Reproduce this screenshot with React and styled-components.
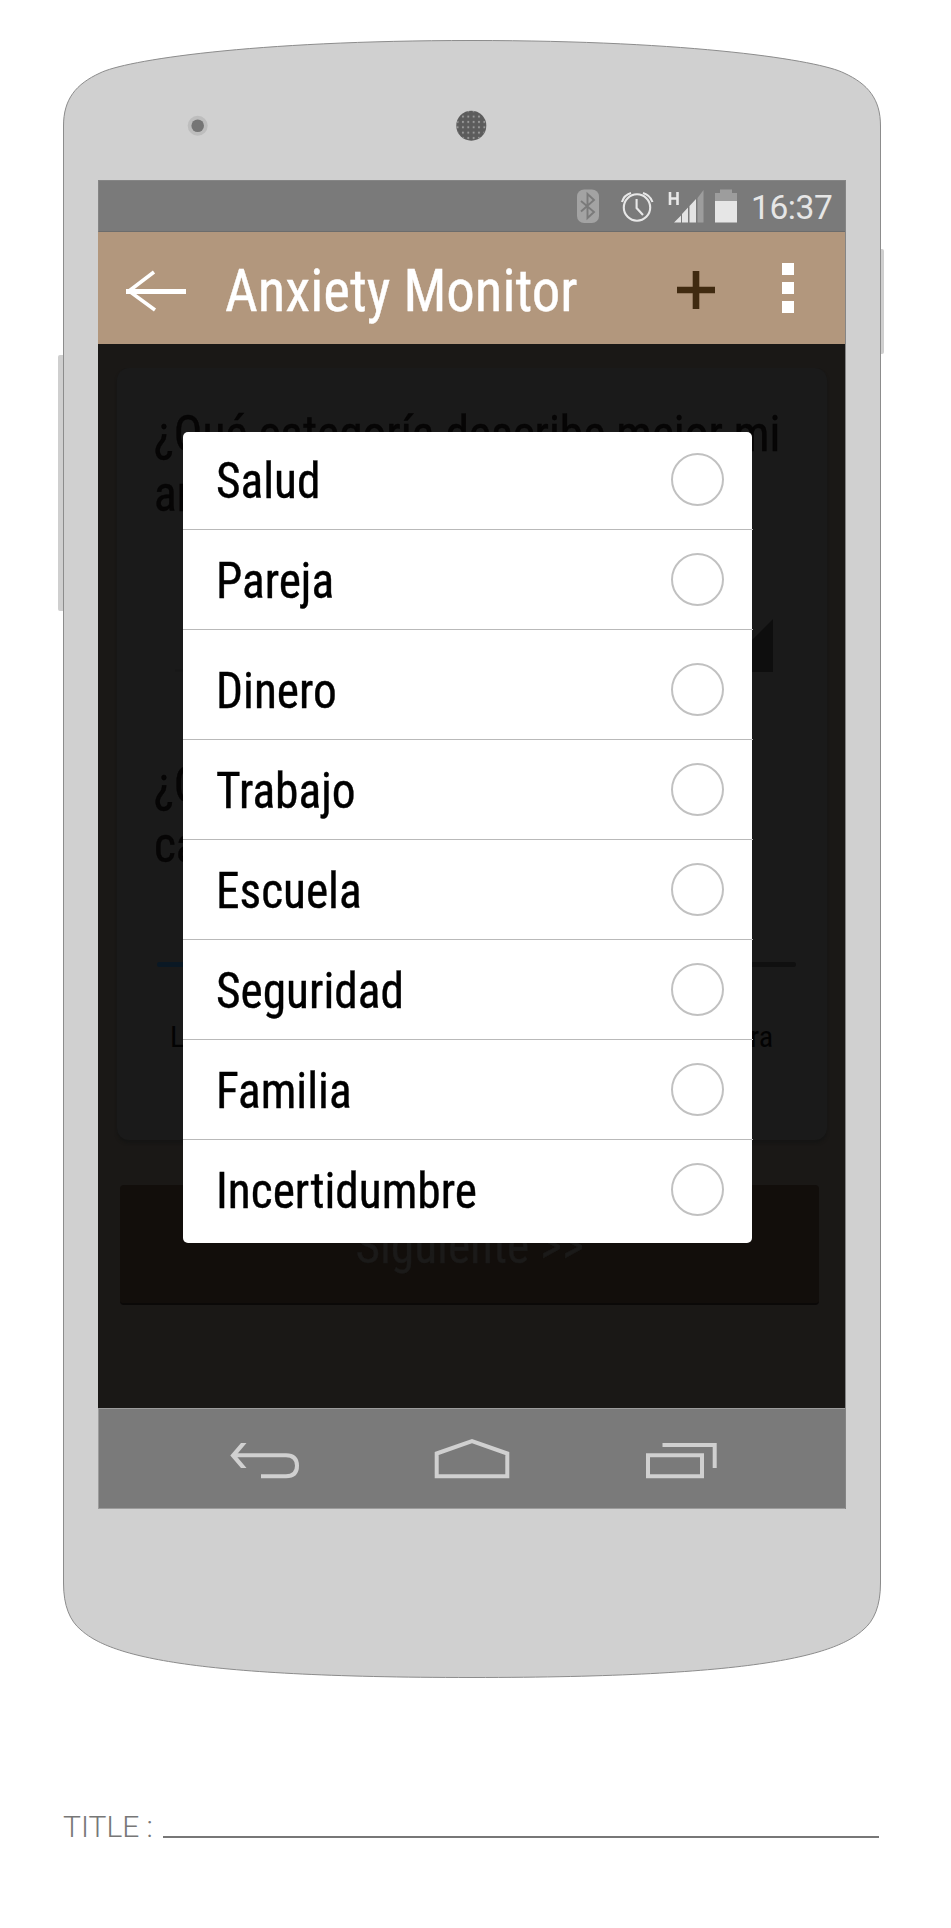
import React from "react";
import styled, { createGlobalStyle, css } from "styled-components";

const GlobalStyle = createGlobalStyle`
  * { box-sizing: border-box; }
  body { margin: 0; background: #fff; font-family: Roboto, "Liberation Sans", sans-serif; }
`;

const condensed = css`
  font-family: "Roboto Condensed", Roboto, sans-serif;
  font-stretch: 75%;
  font-weight: 430;
`;

const narrow = css`
  ${condensed}
  -webkit-text-stroke: 0.4px currentColor;
  transform: scaleX(0.947);
  transform-origin: left center;
`;

const Page = styled.main`
  width: 951px;
  height: 1928px;
  padding: 40px 0 0 58px;
  overflow: hidden;
`;

const Phone = styled.section`
  position: relative;
  width: 827px;
  height: 1638px;
  padding: 0 39px 0 40px;
`;

const Shell = styled.svg`
  position: absolute;
  left: -58px;
  top: -40px;
`;

const Bezel = styled.div`
  position: relative;
  height: 140px;
`;

const Screen = styled.div`
  position: relative;
  display: flex;
  flex-direction: column;
  width: 748px;
  height: 1329px;
  border-right: 1px solid #858585;
`;

const StatusBar = styled.div`
  display: flex;
  align-items: center;
  justify-content: flex-end;
  height: 52px;
  padding-right: 12px;
  background: #7a7a7a;
  border: 1px solid #858585;
  border-bottom-color: #6c6c6c;
  border-right: 0;
`;

const StatusIcons = styled.svg`
  flex: none;
  margin-right: 13px;
`;

const Clock = styled.time`
  width: 82px;
  font-size: 33.5px;
  line-height: 50px;
  letter-spacing: -0.4px;
  padding-top: 4px;
  color: #e6e6e6;
`;

const AppBar = styled.header`
  display: flex;
  align-items: center;
  height: 112px;
  padding: 6px 0 0 28px;
  background: #b2977d;
`;

const Title = styled.h1`
  ${narrow}
  width: 452px;
  margin: 0 0 0 39px;
  font-size: 60px;
  line-height: 106px;
  white-space: nowrap;
  color: #fff;
`;

const Overflow = styled.div`
  display: grid;
  gap: 7px;
  margin-left: 67px;
  padding-bottom: 6px;
`;

const Square = styled.i`
  width: 12px;
  height: 12px;
  background: #fff;
`;

const Content = styled.div`
  position: relative;
  height: 1064px;
  padding: 24px 0 0 19px;
  background: #1a1816;
`;

const Card = styled.div`
  width: 710px;
  height: 772px;
  padding: 36px 0 0 37px;
  border-radius: 12px;
  background: #1a1a1a;
  box-shadow: 0 3px 3px #151514;
`;

const Question = styled.p`
  ${narrow}
  height: 120px;
  margin: 0;
  font-size: 50px;
  line-height: 60px;
  white-space: pre;
  color: #060505;
`;

const Spinner = styled.svg`
  display: block;
  margin: 94px 0 83px 21px;
`;

const Track = styled.div`
  width: 639px;
  height: 5px;
  margin: 87px 0 0 3px;
  border-radius: 2px;
  background: linear-gradient(90deg, #0a1824 30%, #101010 30%);
`;

const Scale = styled.div`
  ${condensed}
  display: flex;
  justify-content: space-between;
  width: 603px;
  margin: 50px 0 0 16px;
  font-size: 30px;
  line-height: 40px;
  color: #030303;
`;

const NextButton = styled.button`
  display: block;
  width: 699px;
  height: 120px;
  margin: 45px 0 0 3px;
  padding: 4px 0 0;
  border: 0;
  border-radius: 4px;
  border-bottom: 2px solid #0b0908;
  background: #120e0b;
  color: #1b1a19;
  font-size: 50px;
`;

const NextLabel = styled.span`
  ${narrow}
  display: inline-block;
  transform-origin: center;
`;

const Dialog = styled.ul`
  position: absolute;
  left: 85px;
  top: 88px;
  width: 569px;
  height: 811px;
  margin: 0;
  padding: 0;
  list-style: none;
  background: #fff;
  border-radius: 5px;
`;

const Option = styled.li`
  display: flex;
  align-items: center;
  justify-content: space-between;
  width: 570px;
  height: ${(p) => p.$height || 100}px;
  padding: ${(p) => p.$pad || "0"};
  padding-left: 33px;
  padding-right: 29px;
  border-bottom: ${(p) => (p.$last ? "0" : "1px solid #b9b9b9")};
`;

const Label = styled.span`
  ${narrow}
  padding-top: 3px;
  font-size: 50px;
  line-height: 60px;
  color: #000;
`;

const Radio = styled.span`
  width: 53px;
  height: 53px;
  border: 2px solid #c1c1c1;
  border-radius: 50%;
`;

const NavBar = styled.nav`
  display: flex;
  height: 101px;
  background: #7a7a7a;
  border: 1px solid #9c9c9c;
  border-right: 0;
`;

const Caption = styled.footer`
  display: flex;
  align-items: flex-end;
  width: 821px;
  margin-top: 131px;
  padding-left: 5px;
  color: #777;
  font-size: 30px;
  font-weight: 300;
  line-height: 36px;
`;

const CaptionLabel = styled.span`
  width: 100px;
  white-space: nowrap;
`;

const CaptionLine = styled.span`
  flex: 1;
  height: 2px;
  margin-bottom: 7px;
  background: #777;
`;

const options = [
  { name: "Salud", height: 98, pad: "0 0 2px" },
  { name: "Pareja" },
  { name: "Dinero", height: 110, pad: "10px 0 0" },
  { name: "Trabajo" },
  { name: "Escuela" },
  { name: "Seguridad" },
  { name: "Familia" },
  { name: "Incertidumbre", height: 103, pad: "0 0 4px", last: true },
];

function PhoneShell() {
  return (
    <Shell width="951" height="1700" viewBox="0 0 951 1700">
      <rect x="58" y="355" width="8" height="256" rx="2" fill="#cfcfcf" />
      <rect x="877" y="249" width="7" height="105" rx="2" fill="#cfcfcf" />
      <path
        d="M63.5 126C63.5 99 76 84 100 73C125 60.5 250 40.5 472 40.5C694 40.5 819 60.5 844 73C868 84 880.5 99 880.5 126V1583C880.5 1606 874 1621 863 1630C835 1655 760 1677.5 472 1677.5C184 1677.5 109 1655 81 1630C70 1621 63.5 1606 63.5 1583Z"
        fill="#d0d0d0"
        stroke="#8c8c8c"
      />
      <defs>
        <pattern id="mesh" x="465.6" y="124.6" width="5.35" height="5.35" patternUnits="userSpaceOnUse">
          <circle cx="2.7" cy="2.7" r="1.05" fill="#999" />
        </pattern>
      </defs>
      <circle cx="197.7" cy="125.7" r="10" fill="#bdbdbd" />
      <circle cx="197.7" cy="125.7" r="6.3" fill="#757575" />
      <circle cx="471.3" cy="125.7" r="15" fill="#5c5c5c" />
      <circle cx="471.3" cy="125.7" r="14.6" fill="url(#mesh)" />
    </Shell>
  );
}

function Indicators() {
  return (
    <StatusIcons width="162" height="36" viewBox="576 188 162 36">
      <rect x="577" y="189.5" width="22" height="33.5" rx="7" fill="#a3a3a3" />
      <path d="M581 201L594 212L587.5 218V194L594 200L581 211.5" fill="none" stroke="#7a7a7a" strokeWidth="1.9" />
      <g fill="none" stroke="#e8e8e8" strokeWidth="2.1">
        <circle cx="637" cy="207.5" r="13.2" />
        <path d="M636.6 199V208L643 215M622 202Q624 195 631 193M643 193Q650 195 652.5 202" />
      </g>
      <path d="M670 192V205M677.5 192V205M670 198.5H677.5" stroke="#e8e8e8" strokeWidth="2.6" />
      <path d="M674 222.5L681 215.5V222.5ZM682 214L688 207.5V222.5H682ZM689.5 206L696 199V222.5H689.5Z" fill="#e4e4e4" />
      <path d="M697.5 198L703.5 190V222.5H697.5Z" fill="#9d9d9d" />
      <path d="M715 193H720V189.5H732V193H737V201H715Z" fill="#9d9d9d" />
      <path d="M715 201H737V222.5H715Z" fill="#e6e6e6" />
    </StatusIcons>
  );
}

function BackArrow() {
  return (
    <svg width="60" height="42" viewBox="0 0 60 42">
      <path d="M28 2L3 21L29 40" fill="none" stroke="#fff" strokeWidth="3.6" />
      <path d="M0 21.5H60" stroke="#fff" strokeWidth="5" />
    </svg>
  );
}

function PlusIcon() {
  return (
    <svg width="38" height="40" viewBox="0 0 38 40">
      <path d="M19 0V38M0 19H38" stroke="#402a10" strokeWidth="6.6" />
    </svg>
  );
}

function NavIcons() {
  return (
    <svg width="746" height="99" viewBox="99 1409 746 99" fill="none" stroke="#d0d0d0" strokeWidth="4">
      <path d="M261 1476.3H286Q297 1476.3 297 1465.8Q297 1455.2 286 1455.2H236" />
      <path d="M241 1443H246.5L236 1455.5L246.5 1468H241L230.3 1455.5Z" fill="#d0d0d0" stroke="none" />
      <path d="M436.7 1453.5L472 1441.2L507.3 1453.5V1476.3H436.7Z" />
      <path d="M648 1455.3H702V1476.3H648ZM662.5 1445H714.7V1468" />
    </svg>
  );
}

export default function App() {
  return (
    <>
      <GlobalStyle />
      <Page>
        <Phone>
          <PhoneShell />
          <Bezel />
          <Screen>
            <StatusBar>
              <Indicators />
              <Clock>16:37</Clock>
            </StatusBar>
            <AppBar>
              <BackArrow />
              <Title>Anxiety Monitor</Title>
              <PlusIcon />
              <Overflow>
                <Square />
                <Square />
                <Square />
              </Overflow>
            </AppBar>
            <Content>
              <Card>
                <Question>{"¿Qué categoría describe mejor mi\nansiedad?"}</Question>
                <Spinner width="598" height="54" viewBox="0 0 598 54">
                  <path d="M598 1V54H545Z" fill="#0e0e0e" />
                  <path d="M0 52.5H545" stroke="#171717" strokeWidth="2" />
                </Spinner>
                <Question>{"¿Qué intensidad tiene\ncada día?"}</Question>
                <Track />
                <Scale>
                  <span>Leve</span>
                  <span>Severa</span>
                </Scale>
              </Card>
              <NextButton>
                <NextLabel>Siguiente &gt;&gt;</NextLabel>
              </NextButton>
              <Dialog>
                {options.map((o) => (
                  <Option key={o.name} $height={o.height} $pad={o.pad} $last={o.last}>
                    <Label>{o.name}</Label>
                    <Radio />
                  </Option>
                ))}
              </Dialog>
            </Content>
            <NavBar>
              <NavIcons />
            </NavBar>
          </Screen>
        </Phone>
        <Caption>
          <CaptionLabel>TITLE :</CaptionLabel>
          <CaptionLine />
        </Caption>
      </Page>
    </>
  );
}
